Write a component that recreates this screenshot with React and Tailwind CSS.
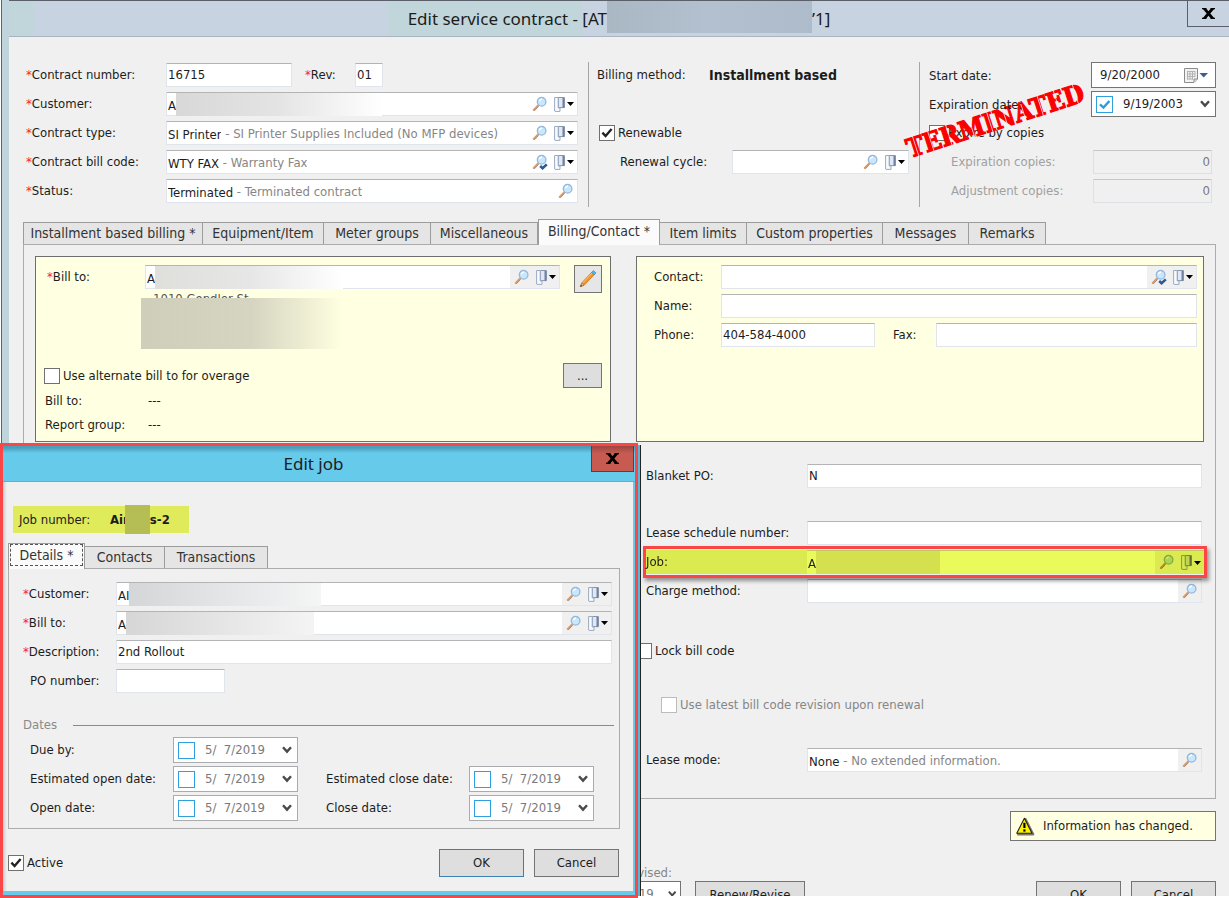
import { useState } from 'react';
import clsx from 'clsx';

const mainTabs = [
  { name: 'Installment based billing *', width: 'w-[180px]' },
  { name: 'Equipment/Item', width: 'w-[121px]' },
  { name: 'Meter groups', width: 'w-[107px]' },
  { name: 'Miscellaneous', width: 'w-[107px]' },
  { name: 'Billing/Contact *', width: 'w-[122px]' },
  { name: 'Item limits', width: 'w-[87px]' },
  { name: 'Custom properties', width: 'w-[136px]' },
  { name: 'Messages', width: 'w-[86px]' },
  { name: 'Remarks', width: 'w-[77px]' },
];

const jobTabs = [
  { name: 'Details *', width: 'w-[77px]' },
  { name: 'Contacts', width: 'w-[80px]' },
  { name: 'Transactions', width: 'w-[103px]' },
];

// Gaps of the stamp's stencil letters, measured from the start of the word
const stencilCuts = [9, 25, 44, 68, 87, 103, 122, 140, 157, 177];

const SearchIcon = ({ check }) => (
  <svg width="16" height="17" viewBox="0 0 16 17" fill="none" aria-hidden="true">
    <path d="M1.8 14 6.2 9.4" stroke="#dd9a62" strokeWidth="2.1" strokeLinecap="round" />
    <path d="M2.4 14.8 6.4 10.6" stroke="#8a7a8c" strokeWidth="0.7" />
    <circle cx="9.6" cy="5.8" r="4.3" fill="#c9e7fb" stroke="#94b8de" strokeWidth="1.3" />
    <path d="M7.4 5.2A2.8 2.8 0 0 1 10 3" stroke="#fff" strokeWidth="1.4" />
    {check && <path d="M8.2 12 10.6 14.2 14.8 10.4" stroke="#2c5a92" strokeWidth="2.6" />}
  </svg>
);

const BookIcon = () => (
  <svg width="11" height="17" viewBox="0 0 11 17" fill="none" aria-hidden="true">
    <path d="M4.5 1.5H10.4V11.6H4.5Z" fill="#dfe8f4" stroke="#8695ae" />
    <path d="M9.4 2V11.8" stroke="#6f80a0" strokeWidth="1.8" />
    <path d="M.6 1.5H4.2V12H6V15.4H1L.6 15Z" fill="#f8fafd" stroke="#9aabc0" />
  </svg>
);

const Caret = () => (
  <svg width="7" height="4" viewBox="0 0 7 4" aria-hidden="true">
    <path d="M0 0H7L3.5 4Z" fill="#000" />
  </svg>
);

const Chevron = () => (
  <svg width="10" height="8" viewBox="0 0 10 8" fill="none" aria-hidden="true">
    <path d="M1 1.2 5 5.6 9 1.2" stroke="#4a4a4a" strokeWidth="2.4" />
  </svg>
);

const CloseIcon = () => (
  <svg width="13" height="11" viewBox="0 0 13 11" aria-hidden="true">
    <path d="M2 0 11 11M11 0 2 11" stroke="#000" strokeWidth="2.8" />
    <path d="M0 .6H4.4M8.6 .6H13M0 10.4H4.4M8.6 10.4H13" stroke="#000" strokeWidth="1.2" />
  </svg>
);

const CalendarIcon = () => (
  <svg width="24" height="15" viewBox="0 0 24 15" fill="none" aria-hidden="true">
    <path d="M.5.5H13.5V11L10 14.5H.5Z" fill="#f2f2f2" stroke="#8b8b8b" />
    <path d="M3 3.5H11M3 6H11M3 8.5H11M3 11H9M3.5 3V11.5M6 3V11.5M8.5 3V11.5M11 3V9" stroke="#b3b3b3" />
    <path d="M10 14V11H13.5" fill="#ddd" stroke="#8b8b8b" />
    <path d="M15.5 5H24L19.7 9.6Z" fill="#3d5f8f" />
  </svg>
);

const PencilIcon = () => (
  <svg width="20" height="20" viewBox="0 0 20 20" fill="none" aria-hidden="true">
    <path d="M2.4 17.6 4 13.6 14 3 16.6 5.2 6.4 16Z" fill="#f0962c" stroke="#c26a14" strokeWidth=".7" />
    <path d="M4.8 13.8 14.4 3.8" stroke="#fbc67c" strokeWidth="1" />
    <path d="M2.4 17.6 3.8 14.2 6 16.2Z" fill="#f5dfc0" stroke="#8a5a2a" strokeWidth=".6" />
    <path d="M13.6 3.4 15.4 1.6 18 3.9 16.2 5.8Z" fill="#58b6e4" stroke="#3b8ebc" strokeWidth=".7" />
    <path d="M2.4 17.6 3 15.8 4.2 17Z" fill="#333" />
  </svg>
);

const WarningIcon = () => (
  <svg width="20" height="20" viewBox="0 0 20 20" aria-hidden="true">
    <path d="M10.6 3 18.4 18.4H3Z" fill="#777" stroke="#777" strokeWidth="2" strokeLinejoin="round" />
    <path d="M9.4 2.2 17 17.2H1.8Z" fill="#fff200" stroke="#222" strokeWidth="1.1" strokeLinejoin="round" />
    <path d="M9.4 6.8V12" stroke="#000" strokeWidth="2.2" />
    <path d="M9.4 13.4V15.6" stroke="#000" strokeWidth="2.2" />
  </svg>
);

const fieldBorder = 'border border-[#e0e4ec] border-t-[#b4b4b6] bg-white';

const Label = ({ htmlFor, required, muted, className, children }) => (
  <label htmlFor={htmlFor} className={clsx('shrink-0 whitespace-nowrap', muted && 'text-[#a0a0a0]', className)}>
    {required && <span className="text-[#ff1a1a]">*</span>}
    {children}
  </label>
);

const TextField = ({ id, value = '', className, disabled }) => (
  <input
    id={id}
    type="text"
    defaultValue={value}
    disabled={disabled}
    className={clsx(
      'h-6 min-w-0 px-px pb-px outline-none',
      disabled ? 'border border-[#dcdfe4] border-t-[#c6c6c8] bg-[#f0f0f0] text-right text-[#7a7a7a]' : fieldBorder,
      className
    )}
  />
);

// Text box with a search button and, most of the time, a record menu
const Lookup = ({ id, value = '', detail, mask, check, menu = true, gray, clear, className }) => (
  <div
    className={clsx(
      'flex h-6 min-w-0 items-stretch',
      clear ? 'border-t border-[#c0c565] bg-[#ebfa5b]' : fieldBorder,
      className
    )}
  >
    <input id={id} type="text" defaultValue={value} className={clsx('min-w-0 bg-transparent pt-[3px] pl-px outline-none', (detail || mask) ? 'field-sizing-content' : 'flex-1')} />
    {detail && <span className="truncate pt-1 whitespace-pre text-[#868686]"> - {detail}</span>}
    {mask && <span className={clsx('h-[23px] shrink-0', mask)} />}
    <div className={clsx('ml-auto flex items-center pr-[3px]', gray && 'bg-[#f0f0f0] pl-1', clear && 'bg-[#dcea52] pl-1')}>
      <button type="button" aria-label="Search" className={clsx(clear && 'mix-blend-multiply')}>
        <SearchIcon check={check} />
      </button>
      {menu && (
        <button type="button" aria-label="Open record" className={clsx('ml-[6px] flex items-center gap-[2px]', clear && 'mix-blend-multiply')}>
          <BookIcon />
          <Caret />
        </button>
      )}
    </div>
  </div>
);

const Checkbox = ({ id, checked, muted, children, className }) => {
  const [on, setOn] = useState(!!checked);
  return (
    <div className={clsx('flex items-center gap-[3px]', className)}>
      <span className="relative flex">
        <input
          id={id}
          type="checkbox"
          checked={on}
          disabled={muted}
          onChange={() => setOn(!on)}
          className={clsx('size-4 appearance-none border bg-white', muted ? 'border-[#bcbcbc]' : 'border-[#707070]')}
        />
        {on && (
          <svg width="16" height="16" viewBox="0 0 16 16" fill="none" className="pointer-events-none absolute inset-0">
            <path d="M3.4 7.6 6.6 11 12.6 4" stroke="#222" strokeWidth="2.4" />
          </svg>
        )}
      </span>
      <label htmlFor={id} className={clsx('whitespace-nowrap', muted && 'text-[#868686]')}>{children}</label>
    </div>
  );
};

const DateField = ({ id, value, checked, dark, className }) => {
  const [on, setOn] = useState(!!checked);
  return (
    <div className={clsx('flex h-[26px] shrink-0 items-center border bg-white pr-[5px] pl-1', dark ? 'border-[#747474]' : 'border-[#a9abae]', className)}>
      <span className="relative flex">
        <input
          type="checkbox"
          aria-label="Use date"
          checked={on}
          onChange={() => setOn(!on)}
          className="size-[17px] appearance-none border border-[#2fa0dd] bg-white"
        />
        {on && (
          <svg width="17" height="17" viewBox="0 0 17 17" fill="none" className="pointer-events-none absolute inset-0">
            <path d="M4 8.4 7.4 11.6 13.4 5" stroke="#2b9fdc" strokeWidth="2.4" />
          </svg>
        )}
      </span>
      <input
        id={id}
        type="text"
        defaultValue={value}
        className={clsx('w-0 min-w-0 flex-1 pl-[10px] outline-none', dark ? 'text-[#222]' : 'text-[#7a7a7a]')}
      />
      <button type="button" aria-label="Choose date"><Chevron /></button>
    </div>
  );
};

const Tabs = ({ tabs, active, onSelect, dotted }) => (
  <div role="tablist" className="flex items-end text-sm leading-5">
    {tabs.map((tab, index) => {
      const selected = index === active;
      return (
        <button
          key={tab.name}
          type="button"
          role="tab"
          aria-selected={selected}
          onClick={() => onSelect(index)}
          className={clsx(
            'shrink-0 border-t border-r border-[#9c9c9c] text-center whitespace-nowrap text-[#333]',
            tab.width,
            index === 0 && 'border-l',
            selected ? 'relative z-1 -mb-px h-[26px] border-l bg-[#fbfbfb] pb-1' : 'h-[22px] bg-[#e5e5e5] pb-px'
          )}
        >
          {selected && dotted ? (
            <span className="mx-px block border border-dashed border-[#555]">{tab.name}</span>
          ) : (
            tab.name
          )}
        </button>
      );
    })}
  </div>
);

const PushButton = ({ primary, className, children }) => (
  <button
    type="button"
    className={clsx('h-7 border bg-[#dedede] text-center', primary ? 'border-[#3c7fb1]' : 'border-[#747474]', className)}
  >
    {children}
  </button>
);

const ContractHeader = () => (
  <section className="grid grid-cols-[minmax(0,563fr)_minmax(0,331fr)_minmax(0,296fr)] pl-[17px]">
    <div className="flex flex-col gap-[5px] border-r border-[#a6a6a6] pt-px pr-[10px] pb-1">
      <div className="flex items-center">
        <Label htmlFor="contractNumber" required className="w-[140px]">Contract number:</Label>
        <TextField id="contractNumber" value="16715" className="w-[126px]" />
        <Label htmlFor="rev" required className="ml-[13px] w-[50px]">Rev:</Label>
        <TextField id="rev" value="01" className="w-7" />
      </div>
      <div className="flex items-center">
        <Label htmlFor="customer" required className="w-[140px]">Customer:</Label>
        <Lookup id="customer" value="A" mask="w-[206px] bg-linear-to-r from-[#d8d8d8] via-[#e4e4e5] to-white" className="flex-1" />
      </div>
      <div className="flex items-center">
        <Label htmlFor="contractType" required className="w-[140px]">Contract type:</Label>
        <Lookup id="contractType" value="SI Printer" detail="SI Printer Supplies Included (No MFP devices)" className="flex-1" />
      </div>
      <div className="flex items-center">
        <Label htmlFor="billCode" required className="w-[140px]">Contract bill code:</Label>
        <Lookup id="billCode" value="WTY FAX" detail="Warranty Fax" check className="flex-1" />
      </div>
      <div className="flex items-center">
        <Label htmlFor="status" required className="w-[140px]">Status:</Label>
        <Lookup id="status" value="Terminated" detail="Terminated contract" menu={false} className="flex-1" />
      </div>
    </div>

    <div className="flex flex-col gap-[5px] border-r border-[#a6a6a6] pt-px pr-[10px] pl-2">
      <div className="flex h-6 items-center">
        <span className="w-28">Billing method:</span>
        <span className="text-sm font-bold">Installment based</span>
      </div>
      <div className="h-6" />
      <Checkbox id="renewable" checked className="h-6 pl-[2px]">Renewable</Checkbox>
      <div className="flex items-center pl-[23px]">
        <Label htmlFor="renewalCycle" className="w-28">Renewal cycle:</Label>
        <Lookup id="renewalCycle" className="flex-1" />
      </div>
    </div>

    <div className="relative flex flex-col gap-[3px] pl-[9px]">
      <div className="flex items-center justify-between">
        <Label htmlFor="startDate" className="pt-[2px]">Start date:</Label>
        <div className="flex h-[26px] w-[125px] items-center border border-[#747474] bg-white pr-[7px]">
          <input id="startDate" type="text" defaultValue="9/20/2000" className="w-0 min-w-0 flex-1 pl-2 text-[#222] outline-none" />
          <button type="button" aria-label="Choose start date"><CalendarIcon /></button>
        </div>
      </div>
      <div className="flex items-center justify-between">
        <Label htmlFor="expirationDate" className="relative z-10 pt-[2px]">Expiration date:</Label>
        <DateField id="expirationDate" value="9/19/2003" checked dark className="w-[125px]" />
      </div>
      <Checkbox id="expireByCopies" className="h-[26px]">Expire by copies</Checkbox>
      <div className="flex h-[26px] items-center justify-between pr-1 pl-[22px]">
        <Label htmlFor="expirationCopies" muted>Expiration copies:</Label>
        <TextField id="expirationCopies" value="0" disabled className="w-[119px]" />
      </div>
      <div className="flex h-[26px] items-center justify-between pr-1 pl-[22px]">
        <Label htmlFor="adjustmentCopies" muted>Adjustment copies:</Label>
        <TextField id="adjustmentCopies" value="0" disabled className="w-[119px]" />
      </div>
      <svg width="210" height="100" viewBox="0 0 210 100" className="pointer-events-none absolute top-3 -left-6">
        <g transform="rotate(-18 14 84)">
          <text x="14" y="84" fill="#fb0000" stroke="#fb0000" strokeWidth="1.2" className="font-['DejaVu_Serif_Condensed','DejaVu_Serif',serif] text-[26px] font-bold">
            TERMINATED
          </text>
          {stencilCuts.map((x) => (
            <path key={x} d={`M${14 + x} 64V85`} stroke="#f0f0f0" strokeWidth=".7" />
          ))}
        </g>
      </svg>
    </div>
  </section>
);

const BillToBox = () => (
  <div className="flex flex-col border border-[#6e6e6e] bg-[#ffffe1] px-2 pt-2 pb-1">
    <div className="flex items-start">
      <Label htmlFor="billTo" required className="w-[101px] pl-[3px] leading-6">Bill to:</Label>
      <Lookup id="billTo" value="A" gray mask="w-[188px] bg-linear-to-r from-[#dfe0dc] via-[#e6e6e6] to-white" className="flex-1" />
      <button type="button" aria-label="Edit bill to" className="ml-[14px] flex size-7 items-center justify-center border border-[#747474] bg-[#e6e6e6]">
        <PencilIcon />
      </button>
    </div>
    <div className="mt-px ml-[97px]">
      <div className="h-1 overflow-hidden pl-3 leading-[10px] text-[#555]">1010 Gondler St.</div>
      <div className="h-[51px] w-[202px] bg-linear-to-r from-[#cfcebb] via-[#d6d5c1] via-55% to-[#ffffe1]" />
    </div>
    <div className="mt-[14px] flex h-[26px] items-start justify-between">
      <Checkbox id="altBillTo" className="h-[26px]">Use alternate bill to for overage</Checkbox>
      <PushButton className="h-[25px] w-[39px]">...</PushButton>
    </div>
    <div className="flex h-6 items-center pl-px">
      <span className="w-[103px]">Bill to:</span>
      <span>---</span>
    </div>
    <div className="flex h-6 items-center pl-px">
      <span className="w-[103px]">Report group:</span>
      <span>---</span>
    </div>
  </div>
);

const ContactBox = () => (
  <div className="flex flex-col gap-[5px] border border-[#6e6e6e] bg-[#ffffe1] pt-2 pr-[6px] pl-[17px]">
    <div className="flex items-center">
      <Label htmlFor="contact" className="w-[67px]">Contact:</Label>
      <Lookup id="contact" check gray className="flex-1" />
    </div>
    <div className="flex items-center">
      <Label htmlFor="contactName" className="w-[67px]">Name:</Label>
      <TextField id="contactName" className="flex-1" />
    </div>
    <div className="flex items-center">
      <Label htmlFor="phone" className="w-[67px]">Phone:</Label>
      <TextField id="phone" value="404-584-4000" className="w-[154px]" />
      <Label htmlFor="fax" className="ml-[18px] w-[43px]">Fax:</Label>
      <TextField id="fax" className="flex-1" />
    </div>
  </div>
);

const BillingOptions = () => (
  <div className="flex flex-col pt-[22px] pb-[26px]">
    <div className="flex items-center pr-[2px] pl-[10px]">
      <Label htmlFor="blanketPo" className="w-[161px]">Blanket PO:</Label>
      <TextField id="blanketPo" value="N" className="flex-1" />
    </div>
    <div className="mt-[33px] flex items-center pr-[2px] pl-[10px]">
      <Label htmlFor="leaseSchedule" className="w-[161px]">Lease schedule number:</Label>
      <TextField id="leaseSchedule" className="flex-1" />
    </div>
    <div className="relative z-1 mt-px -mr-[3px] ml-[7px] flex h-8 items-center border-3 border-[#fb4648] shadow-[2px_3px_4px_rgba(0,0,0,0.4)]">
      <Label htmlFor="job" className="w-[161px] bg-[#dcea52] leading-6">Job:</Label>
      <Lookup id="job" value="A" clear mask="w-[124px] bg-[#d5e04e]" className="flex-1" />
    </div>
    <div className="mt-px flex items-center pr-[2px] pl-[10px]">
      <Label htmlFor="chargeMethod" className="w-[161px]">Charge method:</Label>
      <Lookup id="chargeMethod" menu={false} gray className="flex-1" />
    </div>
    <Checkbox id="lockBillCode" className="mt-9 h-6">Lock bill code</Checkbox>
    <Checkbox id="latestRevision" muted className="mt-[30px] h-6 pl-[25px]">Use latest bill code revision upon renewal</Checkbox>
    <div className="mt-[31px] flex items-center pr-[2px] pl-[10px]">
      <Label htmlFor="leaseMode" className="w-[161px]">Lease mode:</Label>
      <Lookup id="leaseMode" value="None" detail="No extended information." menu={false} gray className="flex-1" />
    </div>
  </div>
);

const JobDialog = () => {
  const [tab, setTab] = useState(0);
  return (
    <div role="dialog" aria-label="Edit job" className="absolute bottom-0 left-0 z-20 flex w-[641px]">
      <div className="flex-1 border-3 border-[#fb4648] bg-[#66caea]">
        <header className="relative flex h-9 items-center justify-center border-b border-[#5eb0cb] bg-linear-to-b from-[#4a9fbb] from-5% to-[#66caea] to-20% pr-[11px] font-['Noto_Sans','Open_Sans',sans-serif] text-[17px]">
          <h2>Edit job</h2>
          <button type="button" aria-label="Close" className="absolute top-0 right-px flex h-[26px] w-[43px] items-center justify-center border border-t-0 border-[#7d2f2a] bg-linear-to-b from-[#9b4640] to-[#c75b52] to-30%">
            <CloseIcon />
          </button>
        </header>
        <div className="mr-[2px] mb-1 bg-[#f0f0f0] bg-linear-to-r from-[#c9cccd] to-[#f0f0f0] to-[4px] pr-[13px] pb-[14px] pl-[5px]">
          <div className="pt-6 pl-[5px]">
            <div className="flex h-[27px] w-[176px] items-center bg-[#e0eb5c] pl-1.5">
              <span className="w-[91px]">Job number:</span>
              <span className="font-bold">Air</span>
              <span className="-ml-1 h-[29px] w-[25px] bg-[#b5bd55]" />
              <span className="font-bold">s-2</span>
            </div>
          </div>
          <div className="mt-[10px]">
            <Tabs tabs={jobTabs} active={tab} onSelect={setTab} dotted />
          </div>
          <div className="border border-[#acacac] pb-[7px]">
            <div className="flex flex-col gap-[5px] pt-[13px] pr-[7px] pl-[14px]">
              <div className="flex items-center">
                <Label htmlFor="jobCustomer" required className="w-[93px]">Customer:</Label>
                <Lookup id="jobCustomer" value="AI" gray mask="w-[192px] bg-linear-to-r from-[#d4d6d8] to-[#f4f5f5]" className="flex-1" />
              </div>
              <div className="flex items-center">
                <Label htmlFor="jobBillTo" required className="w-[93px]">Bill to:</Label>
                <Lookup id="jobBillTo" value="A" gray mask="w-[188px] bg-linear-to-r from-[#d6d6d6] to-[#f4f4f4]" className="flex-1" />
              </div>
              <div className="flex items-center">
                <Label htmlFor="jobDescription" required className="w-[93px]">Description:</Label>
                <TextField id="jobDescription" value="2nd Rollout" className="flex-1" />
              </div>
              <div className="flex items-center">
                <Label htmlFor="poNumber" className="w-[93px] pl-[7px]">PO number:</Label>
                <TextField id="poNumber" className="w-[109px]" />
              </div>
            </div>
            <div className="mt-5 flex h-6 items-center pr-[5px] pl-[14px] text-[#8a8a8a]">
              <h3 className="w-[50px]">Dates</h3>
              <div className="h-px flex-1 bg-[#8a8a8a]" />
            </div>
            <div className="flex flex-col gap-[3px] pl-[21px]">
              <div className="flex items-center">
                <Label htmlFor="dueBy" className="w-[143px]">Due by:</Label>
                <DateField id="dueBy" value="5/  7/2019" className="w-[125px]" />
              </div>
              <div className="flex items-center">
                <Label htmlFor="estOpen" className="w-[143px]">Estimated open date:</Label>
                <DateField id="estOpen" value="5/  7/2019" className="w-[125px]" />
                <Label htmlFor="estClose" className="ml-[28px] w-[143px]">Estimated close date:</Label>
                <DateField id="estClose" value="5/  7/2019" className="w-[125px]" />
              </div>
              <div className="flex items-center">
                <Label htmlFor="openDate" className="w-[143px]">Open date:</Label>
                <DateField id="openDate" value="5/  7/2019" className="w-[125px]" />
                <Label htmlFor="closeDate" className="ml-[28px] w-[143px]">Close date:</Label>
                <DateField id="closeDate" value="5/  7/2019" className="w-[125px]" />
              </div>
            </div>
          </div>
          <div className="mt-5 flex items-center pr-px">
            <Checkbox id="active" checked>Active</Checkbox>
            <PushButton primary className="ml-auto w-[85px]">OK</PushButton>
            <PushButton className="ml-[10px] w-[85px]">Cancel</PushButton>
          </div>
        </div>
      </div>
      <div className="mt-[2px] mb-[2px] w-[3px] border-r border-[#222] bg-[#58b7d6]" />
    </div>
  );
};

const App = () => {
  const [tab, setTab] = useState(4);

  return (
    <main className="relative h-screen overflow-hidden font-['DejaVu_Sans_Condensed','DejaVu_Sans',sans-serif] text-[13px] leading-4 text-[#1c1c1c]">
      <div className="flex h-full overflow-hidden border-b-2 border-white bg-[#f0f0f0]">
        <div className="w-[9px] shrink-0 border-l border-white bg-[#c0d4db] shadow-[inset_1px_0_0_#5d6470]" />
        <div className="min-w-0 flex-1">
          <header className="relative flex h-[37px] items-center justify-center border-t border-b border-t-[#5a5f69] border-b-[#aab4c0] bg-[linear-gradient(to_right,#c1d6db_2%,#c8d3e1_2%,#c8d3e1_31%,#c1d6db_31%,#c1d6db_47%,#c8d3e1_47%)] font-['Noto_Sans','Open_Sans',sans-serif] text-[17px] text-[#1c1c1c]">
            <h1 className="flex items-center">
              Edit service contract - [AT
              <span className="mb-1 h-8 w-[205px] bg-linear-to-r from-[#a9b8c3] via-[#b3c0d0] via-50% to-[#adbbcb]" />
              <span>’1]</span>
            </h1>
            <button type="button" aria-label="Close" className="absolute top-0 right-0 flex h-[26px] w-[42px] items-center justify-center border-b border-l border-[#5a5f69]">
              <CloseIcon />
            </button>
          </header>

          <div className="pt-[25px] pr-[13px]">
            <ContractHeader />

            <div className="mt-3 ml-[14px]">
              <Tabs tabs={mainTabs} active={tab} onSelect={setTab} />
              <div className="grid grid-cols-[minmax(0,576fr)_minmax(0,568fr)] gap-x-[25px] border border-[#acacac] pt-[11px] pr-[11px] pl-[11px]">
                <BillToBox />
                <ContactBox />
                <div className="col-start-2">
                  <BillingOptions />
                </div>
              </div>
            </div>

            <div className="mt-3 ml-auto flex h-[30px] w-[206px] items-center gap-2 border border-[#747474] bg-[#ffffe1] pl-1">
              <WarningIcon />
              <span>Information has changed.</span>
            </div>

            <footer className="mt-6 ml-[600px] flex items-start">
              <div className="w-[72px]">
                <Label htmlFor="revised" className="block pr-[9px] text-right text-[#868686]">Revised:</Label>
                <div className="flex h-[26px] items-center border border-[#747474] bg-white pr-1">
                  <select id="revised" className="w-full appearance-none pl-[14px] text-[#7a7a7a]">
                    <option>2019</option>
                  </select>
                  <Chevron />
                </div>
              </div>
              <PushButton className="mt-4 ml-[14px] w-[110px]">Renew/Revise</PushButton>
              <PushButton className="mt-4 ml-auto w-[85px]">OK</PushButton>
              <PushButton className="mt-4 ml-[10px] w-[85px]">Cancel</PushButton>
            </footer>
          </div>
        </div>
      </div>

      <JobDialog />
    </main>
  );
};

export default App;
